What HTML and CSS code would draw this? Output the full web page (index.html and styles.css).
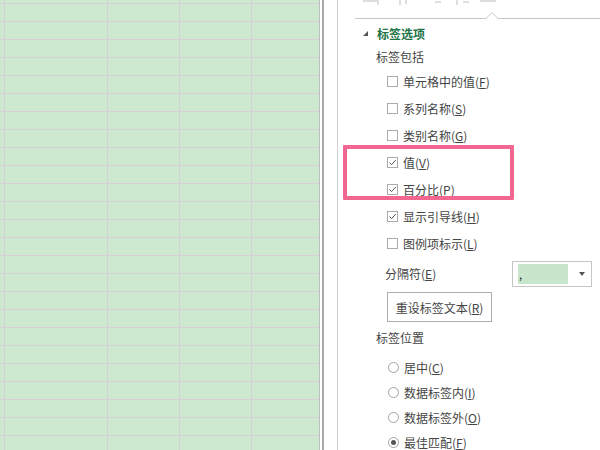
FILE: index.html
```html
<!DOCTYPE html>
<html lang="zh-CN">
<head>
    <meta charset="UTF-8">
    <title>设置数据标签格式</title>
    <link rel="stylesheet" href="styles.css">
</head>
<body>
    <div class="window">
        <!-- Hoja de cálculo (fondo verde) -->
        <div class="sheet"></div>
        <div class="divider"></div>

        <!-- Panel de formato -->
        <div class="pane">
            <svg class="tabs" width="262" height="11" viewBox="0 0 262 11">
                <path d="M25 1 H40 V5 M62 0 V5 M68 0 V4 M97 2 H103 M119 0 V5 M125 2 H131 M142 1 H158" fill="none" stroke="#d4d4d4" stroke-width="1.5"/>
            </svg>
            <svg class="tab-line" width="262" height="8" viewBox="0 0 262 8">
                <path d="M17 7.5 H148 L154 1.5 L160 7.5 H262" fill="none" stroke="#c6c6c6" stroke-width="1"/>
            </svg>

            <div class="group-head"><span class="caret"></span>标签选项</div>
            <div class="label">标签包括</div>

            <div class="check"><span class="box"></span>单元格中的值(<u>F</u>)</div>
            <div class="check"><span class="box"></span>系列名称(<u>S</u>)</div>
            <div class="check"><span class="box"></span>类别名称(<u>G</u>)</div>
            <div class="highlight">
                <div class="check"><span class="box checked"><svg width="9" height="9" viewBox="0 0 9 9"><path d="M1.5 4.5 L3.6 6.6 L7.8 2" fill="none" stroke="#5a5a5a" stroke-width="1"/></svg></span>值(<u>V</u>)</div>
                <div class="check"><span class="box checked"><svg width="9" height="9" viewBox="0 0 9 9"><path d="M1.5 4.5 L3.6 6.6 L7.8 2" fill="none" stroke="#5a5a5a" stroke-width="1"/></svg></span>百分比(<u>P</u>)</div>
            </div>
            <div class="check"><span class="box checked"><svg width="9" height="9" viewBox="0 0 9 9"><path d="M1.5 4.5 L3.6 6.6 L7.8 2" fill="none" stroke="#5a5a5a" stroke-width="1"/></svg></span>显示引导线(<u>H</u>)</div>
            <div class="check"><span class="box"></span>图例项标示(<u>L</u>)</div>

            <div class="field-row">
                <span class="field-text">分隔符(<u>E</u>)</span>
                <div class="select">
                    <span class="swatch">,</span>
                    <span class="arrow"></span>
                </div>
            </div>

            <button class="btn">重设标签文本(<u>R</u>)</button>

            <div class="label label-pos">标签位置</div>
            <div class="radios">
                <div class="radio"><span class="dot"></span>居中(<u>C</u>)</div>
                <div class="radio"><span class="dot"></span>数据标签内(<u>I</u>)</div>
                <div class="radio"><span class="dot"></span>数据标签外(<u>O</u>)</div>
                <div class="radio"><span class="dot on"></span>最佳匹配(<u>F</u>)</div>
            </div>
        </div>
    </div>
</body>
</html>
```

FILE: styles.css
```css
* {
    box-sizing: border-box;
}

body {
    margin: 0;
    width: 600px;
    height: 450px;
    overflow: hidden;
    background: #fff;
    color: #444;
    font-family: "Noto Sans CJK SC", "Microsoft YaHei", sans-serif;
    font-size: 12px;
}

u {
    text-decoration: underline;
    text-underline-offset: 1px;
}

.window {
    display: flex;
    height: 450px;
}

/* Hoja verde con la cuadrícula */
.sheet {
    flex: none;
    width: 320px;
    background-color: #cce8cf;
    background-image:
        repeating-linear-gradient(to right, transparent 0 71px, #d6d0d6 71px 72px),
        repeating-linear-gradient(to bottom, transparent 0 17px, #d6d0d6 17px 18px);
    background-position: 36px 0, 0 4px;
    border-right: 1px solid #bdbdbd;
}

.divider {
    flex: none;
    width: 16px;
    margin-left: 2px;
    border-left: 2px solid #a9a9a9;
    border-right: 1px solid #d0d0d0;
}

.pane {
    flex: 1;
    display: flex;
    flex-direction: column;
    overflow: hidden;
}

/* El panel es más alto que la ventana: nada se encoge */
.pane > * {
    flex-shrink: 0;
}

.tabs,
.tab-line {
    display: block;
}

/* Cabecera del grupo */
.group-head {
    height: 24px;
    margin-top: 2px;
    display: flex;
    align-items: center;
    padding-left: 25px;
    color: #217346;
    font-weight: bold;
}

.caret {
    width: 0;
    height: 0;
    border-style: solid;
    border-width: 0 0 5px 5px;
    border-color: transparent transparent #555 transparent;
    margin-right: 9px;
}

.label {
    height: 23px;
    display: flex;
    align-items: center;
    padding-left: 38px;
}

/* Casillas */
.check {
    height: 27px;
    display: flex;
    align-items: center;
    padding-left: 49px;
}

.box {
    width: 11px;
    height: 11px;
    margin-right: 5px;
    border: 1px solid #ababab;
    background: #fff;
    display: flex;
    align-items: center;
    justify-content: center;
}

.box svg {
    display: block;
}

/* Marco rosa de resaltado */
.highlight {
    position: relative;
}

.highlight::after {
    content: "";
    position: absolute;
    top: -4px;
    bottom: 3px;
    left: 5px;
    width: 163px;
    border: 4px solid #f2678f;
    border-radius: 1px;
    pointer-events: none;
}

/* Separador */
.field-row {
    height: 33px;
    display: flex;
    align-items: center;
    padding-left: 47px;
    padding-right: 8px;
}

.field-text {
    flex: 1;
}

.select {
    width: 80px;
    height: 26px;
    border: 1px solid #c6c6c6;
    display: flex;
    align-items: center;
    padding: 0 6px 0 5px;
}

.swatch {
    width: 50px;
    height: 20px;
    background: #c8e6cc;
    color: #222;
    font-size: 11px;
    line-height: 20px;
    padding-left: 1px;
}

.arrow {
    margin-left: auto;
    width: 0;
    height: 0;
    border-top: 4px solid #555;
    border-left: 3.5px solid transparent;
    border-right: 3.5px solid transparent;
}

.btn {
    margin: 2px 0 0 49px;
    width: 105px;
    height: 30px;
    padding: 0;
    border: 1px solid #adadad;
    background: #fff;
    color: #444;
    font: inherit;
}

.label-pos {
    margin-top: 2px;
    height: 26px;
}

/* Botones de opción */
.radios {
    margin-top: 5px;
}

.radio {
    height: 25px;
    display: flex;
    align-items: center;
    padding-left: 50px;
    line-height: 14px;
}

.dot {
    width: 11px;
    height: 11px;
    margin-right: 5px;
    border: 1px solid #a3a3a3;
    border-radius: 50%;
    display: flex;
    align-items: center;
    justify-content: center;
}

.dot.on::after {
    content: "";
    width: 5px;
    height: 5px;
    border-radius: 50%;
    background: #555;
}
```
